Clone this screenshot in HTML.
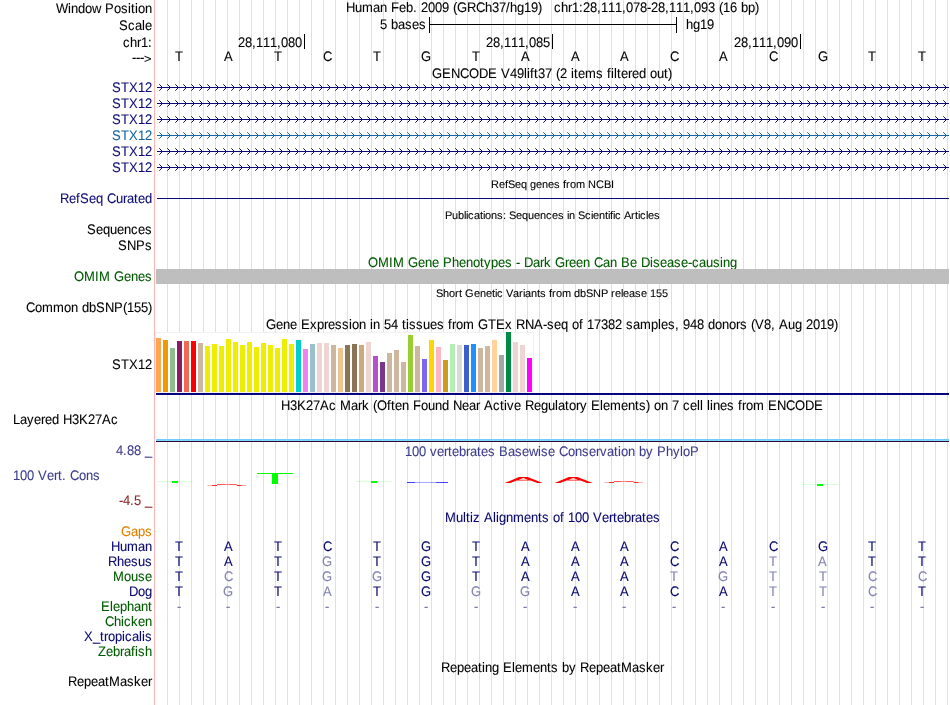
<!DOCTYPE html>
<html lang="en"><head><meta charset="utf-8"><title>UCSC Genome Browser chr1:28,111,078-28,111,093</title>
<style>html,body{margin:0;padding:0;background:#fff;overflow:hidden}svg{display:block;will-change:transform}text{font-family:"Liberation Sans",sans-serif;font-size:13px;white-space:pre;font-kerning:none;stroke-width:0.08px}</style>
</head><body>
<svg width="950" height="705" viewBox="0 0 950 705">
<defs>
<pattern id="gl" x="167" y="0" width="12" height="705" patternUnits="userSpaceOnUse"><rect x="0" y="0" width="1" height="705" fill="#dcdcff"/></pattern>
<path id="ch" d="M159.3,-3.2l3.2,3.2l-3.2,3.2M167.3,-3.2l3.2,3.2l-3.2,3.2M175.3,-3.2l3.2,3.2l-3.2,3.2M183.3,-3.2l3.2,3.2l-3.2,3.2M191.3,-3.2l3.2,3.2l-3.2,3.2M199.3,-3.2l3.2,3.2l-3.2,3.2M207.3,-3.2l3.2,3.2l-3.2,3.2M215.3,-3.2l3.2,3.2l-3.2,3.2M223.3,-3.2l3.2,3.2l-3.2,3.2M231.3,-3.2l3.2,3.2l-3.2,3.2M239.3,-3.2l3.2,3.2l-3.2,3.2M247.3,-3.2l3.2,3.2l-3.2,3.2M255.3,-3.2l3.2,3.2l-3.2,3.2M263.3,-3.2l3.2,3.2l-3.2,3.2M271.3,-3.2l3.2,3.2l-3.2,3.2M279.3,-3.2l3.2,3.2l-3.2,3.2M287.3,-3.2l3.2,3.2l-3.2,3.2M295.3,-3.2l3.2,3.2l-3.2,3.2M303.3,-3.2l3.2,3.2l-3.2,3.2M311.3,-3.2l3.2,3.2l-3.2,3.2M319.3,-3.2l3.2,3.2l-3.2,3.2M327.3,-3.2l3.2,3.2l-3.2,3.2M335.3,-3.2l3.2,3.2l-3.2,3.2M343.3,-3.2l3.2,3.2l-3.2,3.2M351.3,-3.2l3.2,3.2l-3.2,3.2M359.3,-3.2l3.2,3.2l-3.2,3.2M367.3,-3.2l3.2,3.2l-3.2,3.2M375.3,-3.2l3.2,3.2l-3.2,3.2M383.3,-3.2l3.2,3.2l-3.2,3.2M391.3,-3.2l3.2,3.2l-3.2,3.2M399.3,-3.2l3.2,3.2l-3.2,3.2M407.3,-3.2l3.2,3.2l-3.2,3.2M415.3,-3.2l3.2,3.2l-3.2,3.2M423.3,-3.2l3.2,3.2l-3.2,3.2M431.3,-3.2l3.2,3.2l-3.2,3.2M439.3,-3.2l3.2,3.2l-3.2,3.2M447.3,-3.2l3.2,3.2l-3.2,3.2M455.3,-3.2l3.2,3.2l-3.2,3.2M463.3,-3.2l3.2,3.2l-3.2,3.2M471.3,-3.2l3.2,3.2l-3.2,3.2M479.3,-3.2l3.2,3.2l-3.2,3.2M487.3,-3.2l3.2,3.2l-3.2,3.2M495.3,-3.2l3.2,3.2l-3.2,3.2M503.3,-3.2l3.2,3.2l-3.2,3.2M511.3,-3.2l3.2,3.2l-3.2,3.2M519.3,-3.2l3.2,3.2l-3.2,3.2M527.3,-3.2l3.2,3.2l-3.2,3.2M535.3,-3.2l3.2,3.2l-3.2,3.2M543.3,-3.2l3.2,3.2l-3.2,3.2M551.3,-3.2l3.2,3.2l-3.2,3.2M559.3,-3.2l3.2,3.2l-3.2,3.2M567.3,-3.2l3.2,3.2l-3.2,3.2M575.3,-3.2l3.2,3.2l-3.2,3.2M583.3,-3.2l3.2,3.2l-3.2,3.2M591.3,-3.2l3.2,3.2l-3.2,3.2M599.3,-3.2l3.2,3.2l-3.2,3.2M607.3,-3.2l3.2,3.2l-3.2,3.2M615.3,-3.2l3.2,3.2l-3.2,3.2M623.3,-3.2l3.2,3.2l-3.2,3.2M631.3,-3.2l3.2,3.2l-3.2,3.2M639.3,-3.2l3.2,3.2l-3.2,3.2M647.3,-3.2l3.2,3.2l-3.2,3.2M655.3,-3.2l3.2,3.2l-3.2,3.2M663.3,-3.2l3.2,3.2l-3.2,3.2M671.3,-3.2l3.2,3.2l-3.2,3.2M679.3,-3.2l3.2,3.2l-3.2,3.2M687.3,-3.2l3.2,3.2l-3.2,3.2M695.3,-3.2l3.2,3.2l-3.2,3.2M703.3,-3.2l3.2,3.2l-3.2,3.2M711.3,-3.2l3.2,3.2l-3.2,3.2M719.3,-3.2l3.2,3.2l-3.2,3.2M727.3,-3.2l3.2,3.2l-3.2,3.2M735.3,-3.2l3.2,3.2l-3.2,3.2M743.3,-3.2l3.2,3.2l-3.2,3.2M751.3,-3.2l3.2,3.2l-3.2,3.2M759.3,-3.2l3.2,3.2l-3.2,3.2M767.3,-3.2l3.2,3.2l-3.2,3.2M775.3,-3.2l3.2,3.2l-3.2,3.2M783.3,-3.2l3.2,3.2l-3.2,3.2M791.3,-3.2l3.2,3.2l-3.2,3.2M799.3,-3.2l3.2,3.2l-3.2,3.2M807.3,-3.2l3.2,3.2l-3.2,3.2M815.3,-3.2l3.2,3.2l-3.2,3.2M823.3,-3.2l3.2,3.2l-3.2,3.2M831.3,-3.2l3.2,3.2l-3.2,3.2M839.3,-3.2l3.2,3.2l-3.2,3.2M847.3,-3.2l3.2,3.2l-3.2,3.2M855.3,-3.2l3.2,3.2l-3.2,3.2M863.3,-3.2l3.2,3.2l-3.2,3.2M871.3,-3.2l3.2,3.2l-3.2,3.2M879.3,-3.2l3.2,3.2l-3.2,3.2M887.3,-3.2l3.2,3.2l-3.2,3.2M895.3,-3.2l3.2,3.2l-3.2,3.2M903.3,-3.2l3.2,3.2l-3.2,3.2M911.3,-3.2l3.2,3.2l-3.2,3.2M919.3,-3.2l3.2,3.2l-3.2,3.2M927.3,-3.2l3.2,3.2l-3.2,3.2M935.3,-3.2l3.2,3.2l-3.2,3.2M943.3,-3.2l3.2,3.2l-3.2,3.2" fill="none" stroke-width="1"/>
</defs>
<rect width="950" height="705" fill="#fff"/>
<rect x="156" y="0" width="794" height="705" fill="url(#gl)"/>
<rect x="154" y="0" width="1" height="705" fill="#ffb4b4"/>
<text transform="matrix(1 0.001 0 1.063 56 13)" x="0 12 15 22 29 36 45 49 58 65 72 75 79 82 89" y="0 -0.011 -0.014 -0.021 -0.027 -0.034 -0.042 -0.046 -0.055 -0.061 -0.068 -0.071 -0.074 -0.077 -0.084" fill="#000000" stroke="#000000">Window Position</text>
<text transform="matrix(1 0.001 0 1.063 119 30)" x="0 9 16 23 26" y="0 -0.008 -0.015 -0.022 -0.024" fill="#000000" stroke="#000000">Scale</text>
<text transform="matrix(1 0.001 0 1.063 123 47)" x="0 7 14 18 25" y="0 -0.007 -0.013 -0.017 -0.024" fill="#000000" stroke="#000000">chr1:</text>
<text transform="matrix(1 0.001 0 1.063 132 62)" x="0 4 8" y="0 -0.004 -0.008" fill="#000000" stroke="#000000">---</text>
<text transform="matrix(1 0.001 0 0.96 144 63)" x="0" y="0" fill="#000000" stroke="#000000">&gt;</text>
<text transform="matrix(1 0.001 0 1.063 112 92)" x="0 9 17 26 33" y="0 -0.008 -0.016 -0.024 -0.031" fill="#0c0c78" stroke="#0c0c78">STX12</text>
<text transform="matrix(1 0.001 0 1.063 112 108)" x="0 9 17 26 33" y="0 -0.008 -0.016 -0.024 -0.031" fill="#0c0c78" stroke="#0c0c78">STX12</text>
<text transform="matrix(1 0.001 0 1.063 112 124)" x="0 9 17 26 33" y="0 -0.008 -0.016 -0.024 -0.031" fill="#0c0c78" stroke="#0c0c78">STX12</text>
<text transform="matrix(1 0.001 0 1.063 112 140)" x="0 9 17 26 33" y="0 -0.008 -0.016 -0.024 -0.031" fill="#1565a5" stroke="#1565a5">STX12</text>
<text transform="matrix(1 0.001 0 1.063 112 156)" x="0 9 17 26 33" y="0 -0.008 -0.016 -0.024 -0.031" fill="#0c0c78" stroke="#0c0c78">STX12</text>
<text transform="matrix(1 0.001 0 1.063 112 172)" x="0 9 17 26 33" y="0 -0.008 -0.016 -0.024 -0.031" fill="#0c0c78" stroke="#0c0c78">STX12</text>
<text transform="matrix(1 0.001 0 1.063 60 203)" x="0 9 16 20 29 36 43 47 56 63 67 74 78 85" y="0 -0.008 -0.015 -0.019 -0.027 -0.034 -0.04 -0.044 -0.053 -0.059 -0.063 -0.07 -0.073 -0.08" fill="#0c0c78" stroke="#0c0c78">RefSeq Curated</text>
<text transform="matrix(1 0.001 0 1.063 87 234)" x="0 9 16 23 30 37 44 51 58" y="0 -0.008 -0.015 -0.022 -0.028 -0.035 -0.041 -0.048 -0.055" fill="#000000" stroke="#000000">Sequences</text>
<text transform="matrix(1 0.001 0 1.063 118 250)" x="0 9 18 27" y="0 -0.008 -0.017 -0.025" fill="#000000" stroke="#000000">SNPs</text>
<text transform="matrix(1 0.001 0 1.063 74 281)" x="0 10 21 25 36 40 50 57 64 71" y="0 -0.009 -0.02 -0.024 -0.034 -0.038 -0.047 -0.054 -0.06 -0.067" fill="#005a00" stroke="#005a00">OMIM Genes</text>
<text transform="matrix(1 0.001 0 1.063 26 312)" x="0 9 16 27 38 45 52 56 63 70 79 88 97 101 108 115 122" y="0 -0.008 -0.015 -0.025 -0.036 -0.042 -0.049 -0.053 -0.059 -0.066 -0.074 -0.083 -0.091 -0.095 -0.102 -0.108 -0.115" fill="#000000" stroke="#000000">Common dbSNP(155)</text>
<text transform="matrix(1 0.001 0 1.063 112 369)" x="0 9 17 26 33" y="0 -0.008 -0.016 -0.024 -0.031" fill="#000000" stroke="#000000">STX12</text>
<text transform="matrix(1 0.001 0 1.063 13 424)" x="0 7 14 21 28 32 39 46 50 59 66 75 82 89 98" y="0 -0.007 -0.013 -0.02 -0.026 -0.03 -0.037 -0.043 -0.047 -0.056 -0.062 -0.071 -0.077 -0.084 -0.092" fill="#000000" stroke="#000000">Layered H3K27Ac</text>
<text transform="matrix(1 0.001 0 1.063 116 455)" x="0 7 11 18 25 29" y="0 -0.007 -0.01 -0.017 -0.024 -0.027" fill="#3c3c8c" stroke="#3c3c8c">4.88 _</text>
<text transform="matrix(1 0.001 0 1.063 13 480)" x="0 7 14 21 25 34 41 45 49 53 57 66 73 80" y="0 -0.007 -0.013 -0.02 -0.024 -0.032 -0.039 -0.042 -0.046 -0.05 -0.054 -0.062 -0.069 -0.075" fill="#3c3c8c" stroke="#3c3c8c">100 Vert. Cons</text>
<text transform="matrix(1 0.001 0 1.063 119 505)" x="0 4 11 15 22 26" y="0 -0.004 -0.01 -0.014 -0.021 -0.024" fill="#8c2828" stroke="#8c2828">-4.5 _</text>
<text transform="matrix(1 0.001 0 1.063 121 536)" x="0 10 17 24" y="0 -0.009 -0.016 -0.023" fill="#e08000" stroke="#e08000">Gaps</text>
<text transform="matrix(1 0.001 0 1.063 111 551)" x="0 9 16 27 34" y="0 -0.008 -0.015 -0.025 -0.032" fill="#08086e" stroke="#08086e">Human</text>
<text transform="matrix(1 0.001 0 1.063 108 566)" x="0 9 16 23 30 37" y="0 -0.008 -0.015 -0.022 -0.028 -0.035" fill="#08086e" stroke="#08086e">Rhesus</text>
<text transform="matrix(1 0.001 0 1.063 113 581)" x="0 11 18 25 32" y="0 -0.01 -0.017 -0.024 -0.03" fill="#005a00" stroke="#005a00">Mouse</text>
<text transform="matrix(1 0.001 0 1.063 129 596)" x="0 9 16" y="0 -0.008 -0.015" fill="#08086e" stroke="#08086e">Dog</text>
<text transform="matrix(1 0.001 0 1.063 101 611)" x="0 9 12 19 26 33 40 47" y="0 -0.008 -0.011 -0.018 -0.024 -0.031 -0.038 -0.044" fill="#005a00" stroke="#005a00">Elephant</text>
<text transform="matrix(1 0.001 0 1.063 105 626)" x="0 9 16 19 26 33 40" y="0 -0.008 -0.015 -0.018 -0.024 -0.031 -0.038" fill="#005a00" stroke="#005a00">Chicken</text>
<text transform="matrix(1 0.001 0 1.063 84 641)" x="0 9 16 20 24 31 38 41 48 55 58 61" y="0 -0.008 -0.015 -0.019 -0.023 -0.029 -0.036 -0.039 -0.045 -0.052 -0.055 -0.057" fill="#08086e" stroke="#08086e">X_tropicalis</text>
<text transform="matrix(1 0.001 0 1.063 98 656)" x="0 8 15 22 26 33 37 40 47" y="0 -0.008 -0.014 -0.021 -0.024 -0.031 -0.035 -0.038 -0.044" fill="#005a00" stroke="#005a00">Zebrafish</text>
<text transform="matrix(1 0.001 0 1.063 68 686)" x="0 9 16 23 30 37 41 52 59 66 73 80" y="0 -0.008 -0.015 -0.022 -0.028 -0.035 -0.039 -0.049 -0.056 -0.062 -0.069 -0.075" fill="#000000" stroke="#000000">RepeatMasker</text>
<text transform="matrix(1 0.001 0 1.063 346 12)" x="0 9 16 27 34 41 45 53 60 67 71 75 82 89 96 103 107 111 121 130 139 146 153 160 164 171 178 185 192" y="0 -0.008 -0.015 -0.025 -0.032 -0.039 -0.042 -0.05 -0.056 -0.063 -0.067 -0.071 -0.077 -0.084 -0.09 -0.097 -0.101 -0.104 -0.114 -0.122 -0.131 -0.137 -0.144 -0.151 -0.154 -0.161 -0.167 -0.174 -0.181" fill="#000000" stroke="#000000">Human Feb. 2009 (GRCh37/hg19)</text>
<text transform="matrix(1 0.001 0 1.063 554 12)" x="0 7 14 18 25 29 36 43 47 54 61 68 72 79 86 93 97 104 111 115 122 129 136 140 147 154 161 165 169 176 183 187 194 201" y="0 -0.007 -0.013 -0.017 -0.024 -0.027 -0.034 -0.04 -0.044 -0.051 -0.057 -0.064 -0.068 -0.074 -0.081 -0.087 -0.091 -0.098 -0.104 -0.108 -0.115 -0.121 -0.128 -0.132 -0.138 -0.145 -0.151 -0.155 -0.159 -0.166 -0.172 -0.176 -0.183 -0.189" fill="#000000" stroke="#000000">chr1:28,111,078-28,111,093 (16 bp)</text>
<text transform="matrix(1 0.001 0 1.063 380 29)" x="0 7 11 18 25 32 39" y="0 -0.007 -0.01 -0.017 -0.024 -0.03 -0.037" fill="#000000" stroke="#000000">5 bases</text>
<text transform="matrix(1 0.001 0 1.063 686 29)" x="0 7 14 21" y="0 -0.007 -0.013 -0.02" fill="#000000" stroke="#000000">hg19</text>
<text transform="matrix(1 0.001 0 1.063 238 47)" x="0 7 14 18 25 32 39 43 50 57" y="0 -0.007 -0.013 -0.017 -0.024 -0.03 -0.037 -0.04 -0.047 -0.054" fill="#000000" stroke="#000000">28,111,080</text>
<text transform="matrix(1 0.001 0 1.063 486 47)" x="0 7 14 18 25 32 39 43 50 57" y="0 -0.007 -0.013 -0.017 -0.024 -0.03 -0.037 -0.04 -0.047 -0.054" fill="#000000" stroke="#000000">28,111,085</text>
<text transform="matrix(1 0.001 0 1.063 734 47)" x="0 7 14 18 25 32 39 43 50 57" y="0 -0.007 -0.013 -0.017 -0.024 -0.03 -0.037 -0.04 -0.047 -0.054" fill="#000000" stroke="#000000">28,111,090</text>
<text transform="matrix(1 0.001 0 1.063 432 78)" x="0 10 19 28 37 47 56 65 69 78 85 92 95 98 102 106 113 120 124 128 135 139 142 146 153 164 171 175 179 182 185 189 196 200 207 214 218 225 232 236" y="0 -0.009 -0.018 -0.026 -0.035 -0.044 -0.053 -0.061 -0.065 -0.073 -0.08 -0.087 -0.089 -0.092 -0.096 -0.1 -0.106 -0.113 -0.117 -0.12 -0.127 -0.131 -0.134 -0.137 -0.144 -0.154 -0.161 -0.165 -0.168 -0.171 -0.174 -0.178 -0.184 -0.188 -0.195 -0.201 -0.205 -0.212 -0.218 -0.222" fill="#000000" stroke="#000000">GENCODE V49lift37 (2 items filtered out)</text>
<text transform="matrix(1 0.001 0 1.0 491 188)" x="0 8 14 17 24 30 36 39 45 51 57 63 69 72 75 79 85 94 97 105 113 120" y="0 -0.008 -0.014 -0.017 -0.024 -0.03 -0.036 -0.039 -0.045 -0.051 -0.057 -0.063 -0.069 -0.072 -0.075 -0.079 -0.085 -0.094 -0.097 -0.105 -0.113 -0.12" font-size="11" style="font-size:11px" fill="#000000" stroke="#000000">RefSeq genes from NCBI</text>
<text transform="matrix(1 0.001 0 1.0 445 219)" x="0 7 13 19 21 23 29 35 38 40 46 52 58 61 64 71 77 83 89 95 101 107 113 119 122 124 130 133 140 146 148 154 160 163 165 168 170 176 179 186 190 193 195 201 203 209" y="0 -0.007 -0.013 -0.019 -0.021 -0.023 -0.029 -0.035 -0.038 -0.04 -0.046 -0.052 -0.058 -0.061 -0.064 -0.071 -0.077 -0.083 -0.089 -0.095 -0.101 -0.107 -0.113 -0.119 -0.122 -0.124 -0.13 -0.133 -0.14 -0.146 -0.148 -0.154 -0.16 -0.163 -0.165 -0.168 -0.17 -0.176 -0.179 -0.186 -0.19 -0.193 -0.195 -0.201 -0.203 -0.209" font-size="11" style="font-size:11px" fill="#000000" stroke="#000000">Publications: Sequences in Scientific Articles</text>
<text transform="matrix(1 0.001 0 1.063 368 267)" x="0 10 21 25 36 40 50 57 64 71 75 84 91 98 105 112 116 123 130 137 144 148 152 156 165 172 176 183 187 197 201 208 215 222 226 235 242 249 253 262 269 273 282 285 292 299 306 313 320 324 331 338 345 352 355 362" y="0 -0.009 -0.02 -0.024 -0.034 -0.038 -0.047 -0.054 -0.06 -0.067 -0.071 -0.079 -0.086 -0.092 -0.099 -0.105 -0.109 -0.116 -0.122 -0.129 -0.135 -0.139 -0.143 -0.147 -0.155 -0.162 -0.166 -0.172 -0.176 -0.185 -0.189 -0.196 -0.202 -0.209 -0.213 -0.221 -0.228 -0.234 -0.238 -0.246 -0.253 -0.257 -0.265 -0.268 -0.275 -0.281 -0.288 -0.294 -0.301 -0.305 -0.311 -0.318 -0.325 -0.331 -0.334 -0.341" fill="#005a00" stroke="#005a00">OMIM Gene Phenotypes - Dark Green Can Be Disease-causing</text>
<text transform="matrix(1 0.001 0 1.0 436 297)" x="0 7 13 19 23 26 29 38 44 50 56 59 61 67 70 77 83 87 89 95 101 104 110 113 116 120 126 135 138 144 150 157 165 172 175 179 185 187 193 199 205 211 214 220 226" y="0 -0.007 -0.013 -0.019 -0.023 -0.026 -0.029 -0.038 -0.044 -0.05 -0.056 -0.059 -0.061 -0.067 -0.07 -0.077 -0.083 -0.087 -0.089 -0.095 -0.101 -0.104 -0.11 -0.113 -0.116 -0.12 -0.126 -0.135 -0.138 -0.144 -0.15 -0.157 -0.165 -0.172 -0.175 -0.179 -0.185 -0.187 -0.193 -0.199 -0.205 -0.211 -0.214 -0.22 -0.226" font-size="11" style="font-size:11px" fill="#000000" stroke="#000000">Short Genetic Variants from dbSNP release 155</text>
<text transform="matrix(1 0.001 0 1.063 266 329)" x="0 10 17 24 31 35 44 51 58 62 69 76 83 86 93 100 104 107 114 118 125 132 136 140 143 150 157 164 171 178 182 186 190 197 208 212 222 230 239 246 250 259 268 277 281 288 295 302 306 313 317 321 328 335 342 349 356 360 367 374 385 392 395 402 409 413 417 424 431 438 442 449 456 463 470 474 481 485 489 498 505 509 513 522 529 536 540 547 554 561 568" y="0 -0.009 -0.016 -0.023 -0.029 -0.033 -0.041 -0.048 -0.055 -0.058 -0.065 -0.071 -0.078 -0.081 -0.087 -0.094 -0.098 -0.101 -0.107 -0.111 -0.118 -0.124 -0.128 -0.132 -0.135 -0.141 -0.148 -0.154 -0.161 -0.167 -0.171 -0.175 -0.179 -0.185 -0.196 -0.199 -0.209 -0.216 -0.225 -0.231 -0.235 -0.244 -0.252 -0.261 -0.264 -0.271 -0.278 -0.284 -0.288 -0.294 -0.298 -0.302 -0.309 -0.315 -0.322 -0.328 -0.335 -0.339 -0.345 -0.352 -0.362 -0.369 -0.372 -0.378 -0.385 -0.389 -0.392 -0.399 -0.405 -0.412 -0.416 -0.422 -0.429 -0.436 -0.442 -0.446 -0.452 -0.456 -0.46 -0.468 -0.475 -0.479 -0.483 -0.491 -0.498 -0.504 -0.508 -0.515 -0.521 -0.528 -0.534" fill="#000000" stroke="#000000">Gene Expression in 54 tissues from GTEx RNA-seq of 17382 samples, 948 donors (V8, Aug 2019)</text>
<text transform="matrix(1 0.001 0 1.063 281 410)" x="0 9 16 25 32 39 48 55 59 70 77 81 88 92 96 106 110 114 121 128 132 140 147 154 161 168 172 181 188 195 199 203 212 219 223 226 233 240 244 253 260 267 274 277 284 288 295 299 306 310 319 322 329 340 347 354 358 365 369 373 380 387 391 398 402 409 416 419 422 426 429 432 439 446 453 457 461 465 472 483 487 496 505 514 524 533" y="0 -0.008 -0.015 -0.024 -0.03 -0.037 -0.045 -0.052 -0.056 -0.066 -0.072 -0.076 -0.083 -0.087 -0.09 -0.1 -0.103 -0.107 -0.114 -0.12 -0.124 -0.132 -0.138 -0.145 -0.151 -0.158 -0.162 -0.17 -0.177 -0.183 -0.187 -0.191 -0.199 -0.206 -0.21 -0.213 -0.219 -0.226 -0.23 -0.238 -0.245 -0.251 -0.258 -0.261 -0.267 -0.271 -0.278 -0.281 -0.288 -0.292 -0.3 -0.303 -0.31 -0.32 -0.326 -0.333 -0.337 -0.343 -0.347 -0.351 -0.357 -0.364 -0.368 -0.374 -0.378 -0.385 -0.391 -0.394 -0.397 -0.401 -0.404 -0.406 -0.413 -0.42 -0.426 -0.43 -0.434 -0.437 -0.444 -0.454 -0.458 -0.467 -0.475 -0.484 -0.493 -0.501" fill="#000000" stroke="#000000">H3K27Ac Mark (Often Found Near Active Regulatory Elements) on 7 cell lines from ENCODE</text>
<text transform="matrix(1 0.001 0 1.063 405 456)" x="0 7 14 21 25 32 39 43 47 54 61 65 72 76 83 90 94 103 110 117 124 133 136 143 150 154 163 170 177 184 191 195 202 209 213 216 223 230 234 241 248 252 261 268 275 278 285" y="0 -0.007 -0.013 -0.02 -0.024 -0.03 -0.037 -0.04 -0.044 -0.051 -0.057 -0.061 -0.068 -0.071 -0.078 -0.085 -0.088 -0.097 -0.103 -0.11 -0.117 -0.125 -0.128 -0.135 -0.141 -0.145 -0.153 -0.16 -0.167 -0.173 -0.18 -0.183 -0.19 -0.197 -0.2 -0.203 -0.21 -0.216 -0.22 -0.227 -0.233 -0.237 -0.246 -0.252 -0.259 -0.262 -0.268" fill="#3c3c8c" stroke="#3c3c8c">100 vertebrates Basewise Conservation by PhyloP</text>
<text transform="matrix(1 0.001 0 1.063 445 522)" x="0 11 18 21 25 28 35 39 48 51 54 61 68 79 86 93 97 104 108 115 119 123 130 137 144 148 157 164 168 172 179 186 190 197 201 208" y="0 -0.01 -0.017 -0.02 -0.024 -0.026 -0.033 -0.037 -0.045 -0.048 -0.051 -0.057 -0.064 -0.074 -0.081 -0.087 -0.091 -0.098 -0.102 -0.108 -0.112 -0.116 -0.122 -0.129 -0.135 -0.139 -0.148 -0.154 -0.158 -0.162 -0.168 -0.175 -0.179 -0.185 -0.189 -0.196" fill="#08086e" stroke="#08086e">Multiz Alignments of 100 Vertebrates</text>
<text transform="matrix(1 0.001 0 1.063 441 672)" x="0 9 16 23 30 37 41 44 51 58 62 71 74 81 92 99 106 110 117 121 128 135 139 148 155 162 169 176 180 191 198 205 212 219" y="0 -0.008 -0.015 -0.022 -0.028 -0.035 -0.039 -0.041 -0.048 -0.055 -0.058 -0.067 -0.07 -0.076 -0.087 -0.093 -0.1 -0.103 -0.11 -0.114 -0.12 -0.127 -0.131 -0.139 -0.146 -0.152 -0.159 -0.166 -0.169 -0.18 -0.186 -0.193 -0.199 -0.206" fill="#000000" stroke="#000000">Repeating Elements by RepeatMasker</text>
<rect x="429" y="24" width="248" height="1" fill="#000"/>
<rect x="429" y="17" width="1" height="16" fill="#000"/>
<rect x="676" y="17" width="1" height="16" fill="#000"/>
<rect x="304" y="34" width="1" height="15" fill="#000"/>
<rect x="552" y="34" width="1" height="15" fill="#000"/>
<rect x="800" y="34" width="1" height="15" fill="#000"/>
<text transform="matrix(1 0.001 0 1.063 175 61)" x="0" y="0" fill="#000000" stroke="#000000">T</text>
<text transform="matrix(1 0.001 0 1.063 224 61)" x="0" y="0" fill="#000000" stroke="#000000">A</text>
<text transform="matrix(1 0.001 0 1.063 274 61)" x="0" y="0" fill="#000000" stroke="#000000">T</text>
<text transform="matrix(1 0.001 0 1.063 323 61)" x="0" y="0" fill="#000000" stroke="#000000">C</text>
<text transform="matrix(1 0.001 0 1.063 373 61)" x="0" y="0" fill="#000000" stroke="#000000">T</text>
<text transform="matrix(1 0.001 0 1.063 421 61)" x="0" y="0" fill="#000000" stroke="#000000">G</text>
<text transform="matrix(1 0.001 0 1.063 472 61)" x="0" y="0" fill="#000000" stroke="#000000">T</text>
<text transform="matrix(1 0.001 0 1.063 521 61)" x="0" y="0" fill="#000000" stroke="#000000">A</text>
<text transform="matrix(1 0.001 0 1.063 571 61)" x="0" y="0" fill="#000000" stroke="#000000">A</text>
<text transform="matrix(1 0.001 0 1.063 620 61)" x="0" y="0" fill="#000000" stroke="#000000">A</text>
<text transform="matrix(1 0.001 0 1.063 670 61)" x="0" y="0" fill="#000000" stroke="#000000">C</text>
<text transform="matrix(1 0.001 0 1.063 719 61)" x="0" y="0" fill="#000000" stroke="#000000">A</text>
<text transform="matrix(1 0.001 0 1.063 769 61)" x="0" y="0" fill="#000000" stroke="#000000">C</text>
<text transform="matrix(1 0.001 0 1.063 818 61)" x="0" y="0" fill="#000000" stroke="#000000">G</text>
<text transform="matrix(1 0.001 0 1.063 868 61)" x="0" y="0" fill="#000000" stroke="#000000">T</text>
<text transform="matrix(1 0.001 0 1.063 918 61)" x="0" y="0" fill="#000000" stroke="#000000">T</text>
<rect x="157" y="87" width="792" height="1" fill="#0c0c78"/>
<use href="#ch" y="87.5" stroke="#0c0c78"/>
<rect x="157" y="103" width="792" height="1" fill="#0c0c78"/>
<use href="#ch" y="103.5" stroke="#0c0c78"/>
<rect x="157" y="119" width="792" height="1" fill="#0c0c78"/>
<use href="#ch" y="119.5" stroke="#0c0c78"/>
<rect x="157" y="135" width="792" height="1" fill="#1565a5"/>
<use href="#ch" y="135.5" stroke="#1565a5"/>
<rect x="157" y="151" width="792" height="1" fill="#0c0c78"/>
<use href="#ch" y="151.5" stroke="#0c0c78"/>
<rect x="157" y="167" width="792" height="1" fill="#0c0c78"/>
<use href="#ch" y="167.5" stroke="#0c0c78"/>
<rect x="157" y="198" width="792" height="1" fill="#0c0c78"/>
<rect x="156" y="269" width="793" height="15" fill="#bebebe"/>
<rect x="155.5" y="332.5" width="378" height="60" fill="#fff" stroke="#f1f1f1"/>
<rect x="156" y="338" width="5" height="54" fill="#ffa54f"/>
<rect x="163" y="340" width="5" height="52" fill="#ee9a00"/>
<rect x="170" y="348" width="5" height="44" fill="#8fbc8f"/>
<rect x="177" y="341" width="5" height="51" fill="#8b1c62"/>
<rect x="184" y="341" width="5" height="51" fill="#ee6a50"/>
<rect x="191" y="341" width="5" height="51" fill="#ff0000"/>
<rect x="198" y="343" width="5" height="49" fill="#cdb79e"/>
<rect x="205" y="346" width="5" height="46" fill="#eeee00"/>
<rect x="212" y="344" width="5" height="48" fill="#eeee00"/>
<rect x="219" y="346" width="5" height="46" fill="#eeee00"/>
<rect x="226" y="339" width="5" height="53" fill="#eeee00"/>
<rect x="233" y="342" width="5" height="50" fill="#eeee00"/>
<rect x="240" y="345" width="5" height="47" fill="#eeee00"/>
<rect x="247" y="342" width="5" height="50" fill="#eeee00"/>
<rect x="254" y="347" width="5" height="45" fill="#eeee00"/>
<rect x="261" y="343" width="5" height="49" fill="#eeee00"/>
<rect x="268" y="345" width="5" height="47" fill="#eeee00"/>
<rect x="275" y="348" width="5" height="44" fill="#eeee00"/>
<rect x="282" y="339" width="5" height="53" fill="#eeee00"/>
<rect x="289" y="344" width="5" height="48" fill="#eeee00"/>
<rect x="296" y="340" width="5" height="52" fill="#00cdcd"/>
<rect x="303" y="349" width="5" height="43" fill="#ee82ee"/>
<rect x="310" y="344" width="5" height="48" fill="#9ac0cd"/>
<rect x="317" y="343" width="5" height="49" fill="#eed5d2"/>
<rect x="324" y="343" width="5" height="49" fill="#eed5d2"/>
<rect x="331" y="345" width="5" height="47" fill="#cdb79e"/>
<rect x="338" y="348" width="5" height="44" fill="#eec591"/>
<rect x="345" y="345" width="5" height="47" fill="#8b7355"/>
<rect x="352" y="344" width="5" height="48" fill="#8b7355"/>
<rect x="359" y="345" width="5" height="47" fill="#cdaa7d"/>
<rect x="366" y="342" width="5" height="50" fill="#eed5d2"/>
<rect x="373" y="356" width="5" height="36" fill="#b452cd"/>
<rect x="380" y="362" width="5" height="30" fill="#7a378b"/>
<rect x="387" y="353" width="5" height="39" fill="#cdb79e"/>
<rect x="394" y="350" width="5" height="42" fill="#cdb79e"/>
<rect x="401" y="362" width="5" height="30" fill="#cdb79e"/>
<rect x="408" y="335" width="5" height="57" fill="#9acd32"/>
<rect x="415" y="346" width="5" height="46" fill="#cdb79e"/>
<rect x="422" y="359" width="5" height="33" fill="#7a67ee"/>
<rect x="429" y="340" width="5" height="52" fill="#ffd700"/>
<rect x="436" y="347" width="5" height="45" fill="#ffb6c1"/>
<rect x="443" y="360" width="5" height="32" fill="#cd9b1d"/>
<rect x="450" y="344" width="5" height="48" fill="#b4eeb4"/>
<rect x="457" y="345" width="5" height="47" fill="#d9d9d9"/>
<rect x="464" y="345" width="5" height="47" fill="#3a5fcd"/>
<rect x="471" y="344" width="5" height="48" fill="#1e90ff"/>
<rect x="478" y="348" width="5" height="44" fill="#cdb79e"/>
<rect x="485" y="346" width="5" height="46" fill="#cdb79e"/>
<rect x="492" y="340" width="5" height="52" fill="#ffd39b"/>
<rect x="499" y="355" width="5" height="37" fill="#a6a6a6"/>
<rect x="506" y="332" width="5" height="60" fill="#008b45"/>
<rect x="513" y="342" width="5" height="50" fill="#eed5d2"/>
<rect x="520" y="345" width="5" height="47" fill="#eed5d2"/>
<rect x="527" y="358" width="5" height="34" fill="#ff00ff"/>
<rect x="156" y="393" width="793" height="2" fill="#04047c"/>
<rect x="156" y="439" width="793" height="1" fill="#70ccff"/>
<rect x="156" y="440" width="793" height="1" fill="#7cdcff"/>
<rect x="156" y="441" width="793" height="1" fill="#300838"/>
<rect x="157" y="481" width="36" height="1" fill="#00ff00" opacity="0.15"/>
<rect x="172" y="481" width="6" height="2" fill="#00ff00"/>
<rect x="257" y="473" width="36" height="1" fill="#00ff00" opacity="1"/>
<rect x="272" y="473" width="6" height="11" fill="#00ff00"/>
<rect x="356" y="481" width="36" height="1" fill="#00ff00" opacity="0.15"/>
<rect x="371" y="481" width="6" height="2" fill="#00ff00"/>
<rect x="802" y="484" width="36" height="1" fill="#00ff00" opacity="0.15"/>
<rect x="817" y="484" width="6" height="2" fill="#00ff00"/>
<rect x="207.5" y="485" width="4.5" height="1" fill="#ff0000" opacity="0.3"/>
<rect x="212" y="485" width="5" height="1" fill="#ff0000" opacity="0.85"/>
<rect x="217" y="484" width="8" height="1" fill="#ff0000" opacity="0.65"/>
<rect x="225" y="484" width="3.5" height="1" fill="#ff0000" opacity="0.45"/>
<rect x="228.5" y="484" width="8.2" height="1" fill="#ff0000" opacity="0.65"/>
<rect x="236.7" y="485" width="4.8" height="1" fill="#ff0000" opacity="0.85"/>
<rect x="241.5" y="485" width="4.5" height="1" fill="#ff0000" opacity="0.3"/>
<rect x="407" y="482" width="41" height="1" fill="#0000ff" opacity="0.35"/>
<rect x="407" y="482" width="8" height="1" fill="#0000ff" opacity="0.6"/>
<rect x="436" y="482" width="12" height="1" fill="#0000ff" opacity="0.6"/>
<path transform="translate(0,0)" fill="#ff0000" fill-rule="evenodd" d="M504.8,483 L519,477 L527.6,477 L542.7,483 L537.2,483 L530.6,480.5 L516.6,480.5 L510.3,483 Z M518.6,479.8 L523.3,477.9 L528,479.8 Z"/>
<path transform="translate(49.9,0)" fill="#ff0000" fill-rule="evenodd" d="M504.8,483 L519,477 L527.6,477 L542.7,483 L537.2,483 L530.6,480.5 L516.6,480.5 L510.3,483 Z M518.6,479.8 L523.3,477.9 L528,479.8 Z"/>
<rect x="604.5" y="482" width="4.5" height="1" fill="#ff0000" opacity="0.3"/>
<rect x="609" y="482" width="5" height="1" fill="#ff0000" opacity="0.85"/>
<rect x="614" y="481" width="8" height="1" fill="#ff0000" opacity="0.65"/>
<rect x="622" y="481" width="3.5" height="1" fill="#ff0000" opacity="0.45"/>
<rect x="625.5" y="481" width="8.2" height="1" fill="#ff0000" opacity="0.65"/>
<rect x="633.7" y="482" width="4.8" height="1" fill="#ff0000" opacity="0.85"/>
<rect x="638.5" y="482" width="4.5" height="1" fill="#ff0000" opacity="0.3"/>
<text transform="matrix(1 0.001 0 1.063 175 551)" x="0" y="0" fill="#08086e" stroke="#08086e">T</text>
<text transform="matrix(1 0.001 0 1.063 224 551)" x="0" y="0" fill="#08086e" stroke="#08086e">A</text>
<text transform="matrix(1 0.001 0 1.063 274 551)" x="0" y="0" fill="#08086e" stroke="#08086e">T</text>
<text transform="matrix(1 0.001 0 1.063 323 551)" x="0" y="0" fill="#08086e" stroke="#08086e">C</text>
<text transform="matrix(1 0.001 0 1.063 373 551)" x="0" y="0" fill="#08086e" stroke="#08086e">T</text>
<text transform="matrix(1 0.001 0 1.063 421 551)" x="0" y="0" fill="#08086e" stroke="#08086e">G</text>
<text transform="matrix(1 0.001 0 1.063 472 551)" x="0" y="0" fill="#08086e" stroke="#08086e">T</text>
<text transform="matrix(1 0.001 0 1.063 521 551)" x="0" y="0" fill="#08086e" stroke="#08086e">A</text>
<text transform="matrix(1 0.001 0 1.063 571 551)" x="0" y="0" fill="#08086e" stroke="#08086e">A</text>
<text transform="matrix(1 0.001 0 1.063 620 551)" x="0" y="0" fill="#08086e" stroke="#08086e">A</text>
<text transform="matrix(1 0.001 0 1.063 670 551)" x="0" y="0" fill="#08086e" stroke="#08086e">C</text>
<text transform="matrix(1 0.001 0 1.063 719 551)" x="0" y="0" fill="#08086e" stroke="#08086e">A</text>
<text transform="matrix(1 0.001 0 1.063 769 551)" x="0" y="0" fill="#08086e" stroke="#08086e">C</text>
<text transform="matrix(1 0.001 0 1.063 818 551)" x="0" y="0" fill="#08086e" stroke="#08086e">G</text>
<text transform="matrix(1 0.001 0 1.063 868 551)" x="0" y="0" fill="#08086e" stroke="#08086e">T</text>
<text transform="matrix(1 0.001 0 1.063 918 551)" x="0" y="0" fill="#08086e" stroke="#08086e">T</text>
<text transform="matrix(1 0.001 0 1.063 175 566)" x="0" y="0" fill="#08086e" stroke="#08086e">T</text>
<text transform="matrix(1 0.001 0 1.063 224 566)" x="0" y="0" fill="#08086e" stroke="#08086e">A</text>
<text transform="matrix(1 0.001 0 1.063 274 566)" x="0" y="0" fill="#08086e" stroke="#08086e">T</text>
<text transform="matrix(1 0.001 0 1.063 322 566)" x="0" y="0" fill="#8484b2" stroke="#8484b2">G</text>
<text transform="matrix(1 0.001 0 1.063 373 566)" x="0" y="0" fill="#08086e" stroke="#08086e">T</text>
<text transform="matrix(1 0.001 0 1.063 421 566)" x="0" y="0" fill="#08086e" stroke="#08086e">G</text>
<text transform="matrix(1 0.001 0 1.063 472 566)" x="0" y="0" fill="#08086e" stroke="#08086e">T</text>
<text transform="matrix(1 0.001 0 1.063 521 566)" x="0" y="0" fill="#08086e" stroke="#08086e">A</text>
<text transform="matrix(1 0.001 0 1.063 571 566)" x="0" y="0" fill="#08086e" stroke="#08086e">A</text>
<text transform="matrix(1 0.001 0 1.063 620 566)" x="0" y="0" fill="#08086e" stroke="#08086e">A</text>
<text transform="matrix(1 0.001 0 1.063 670 566)" x="0" y="0" fill="#08086e" stroke="#08086e">C</text>
<text transform="matrix(1 0.001 0 1.063 719 566)" x="0" y="0" fill="#08086e" stroke="#08086e">A</text>
<text transform="matrix(1 0.001 0 1.063 769 566)" x="0" y="0" fill="#8484b2" stroke="#8484b2">T</text>
<text transform="matrix(1 0.001 0 1.063 818 566)" x="0" y="0" fill="#8484b2" stroke="#8484b2">A</text>
<text transform="matrix(1 0.001 0 1.063 868 566)" x="0" y="0" fill="#08086e" stroke="#08086e">T</text>
<text transform="matrix(1 0.001 0 1.063 918 566)" x="0" y="0" fill="#08086e" stroke="#08086e">T</text>
<text transform="matrix(1 0.001 0 1.063 175 581)" x="0" y="0" fill="#08086e" stroke="#08086e">T</text>
<text transform="matrix(1 0.001 0 1.063 224 581)" x="0" y="0" fill="#8484b2" stroke="#8484b2">C</text>
<text transform="matrix(1 0.001 0 1.063 274 581)" x="0" y="0" fill="#08086e" stroke="#08086e">T</text>
<text transform="matrix(1 0.001 0 1.063 322 581)" x="0" y="0" fill="#8484b2" stroke="#8484b2">G</text>
<text transform="matrix(1 0.001 0 1.063 372 581)" x="0" y="0" fill="#8484b2" stroke="#8484b2">G</text>
<text transform="matrix(1 0.001 0 1.063 421 581)" x="0" y="0" fill="#08086e" stroke="#08086e">G</text>
<text transform="matrix(1 0.001 0 1.063 472 581)" x="0" y="0" fill="#08086e" stroke="#08086e">T</text>
<text transform="matrix(1 0.001 0 1.063 521 581)" x="0" y="0" fill="#08086e" stroke="#08086e">A</text>
<text transform="matrix(1 0.001 0 1.063 571 581)" x="0" y="0" fill="#08086e" stroke="#08086e">A</text>
<text transform="matrix(1 0.001 0 1.063 620 581)" x="0" y="0" fill="#08086e" stroke="#08086e">A</text>
<text transform="matrix(1 0.001 0 1.063 670 581)" x="0" y="0" fill="#8484b2" stroke="#8484b2">T</text>
<text transform="matrix(1 0.001 0 1.063 718 581)" x="0" y="0" fill="#8484b2" stroke="#8484b2">G</text>
<text transform="matrix(1 0.001 0 1.063 769 581)" x="0" y="0" fill="#8484b2" stroke="#8484b2">T</text>
<text transform="matrix(1 0.001 0 1.063 819 581)" x="0" y="0" fill="#8484b2" stroke="#8484b2">T</text>
<text transform="matrix(1 0.001 0 1.063 868 581)" x="0" y="0" fill="#8484b2" stroke="#8484b2">C</text>
<text transform="matrix(1 0.001 0 1.063 918 581)" x="0" y="0" fill="#8484b2" stroke="#8484b2">C</text>
<text transform="matrix(1 0.001 0 1.063 175 596)" x="0" y="0" fill="#08086e" stroke="#08086e">T</text>
<text transform="matrix(1 0.001 0 1.063 223 596)" x="0" y="0" fill="#8484b2" stroke="#8484b2">G</text>
<text transform="matrix(1 0.001 0 1.063 274 596)" x="0" y="0" fill="#08086e" stroke="#08086e">T</text>
<text transform="matrix(1 0.001 0 1.063 323 596)" x="0" y="0" fill="#8484b2" stroke="#8484b2">A</text>
<text transform="matrix(1 0.001 0 1.063 373 596)" x="0" y="0" fill="#08086e" stroke="#08086e">T</text>
<text transform="matrix(1 0.001 0 1.063 421 596)" x="0" y="0" fill="#08086e" stroke="#08086e">G</text>
<text transform="matrix(1 0.001 0 1.063 471 596)" x="0" y="0" fill="#8484b2" stroke="#8484b2">G</text>
<text transform="matrix(1 0.001 0 1.063 520 596)" x="0" y="0" fill="#8484b2" stroke="#8484b2">G</text>
<text transform="matrix(1 0.001 0 1.063 571 596)" x="0" y="0" fill="#08086e" stroke="#08086e">A</text>
<text transform="matrix(1 0.001 0 1.063 620 596)" x="0" y="0" fill="#08086e" stroke="#08086e">A</text>
<text transform="matrix(1 0.001 0 1.063 670 596)" x="0" y="0" fill="#08086e" stroke="#08086e">C</text>
<text transform="matrix(1 0.001 0 1.063 719 596)" x="0" y="0" fill="#08086e" stroke="#08086e">A</text>
<text transform="matrix(1 0.001 0 1.063 769 596)" x="0" y="0" fill="#8484b2" stroke="#8484b2">T</text>
<text transform="matrix(1 0.001 0 1.063 819 596)" x="0" y="0" fill="#8484b2" stroke="#8484b2">T</text>
<text transform="matrix(1 0.001 0 1.063 868 596)" x="0" y="0" fill="#8484b2" stroke="#8484b2">C</text>
<text transform="matrix(1 0.001 0 1.063 918 596)" x="0" y="0" fill="#08086e" stroke="#08086e">T</text>
<text transform="matrix(1 0.001 0 1.063 177 611)" x="0" y="0" fill="#7c7cae" stroke="#7c7cae">-</text>
<text transform="matrix(1 0.001 0 1.063 226 611)" x="0" y="0" fill="#7c7cae" stroke="#7c7cae">-</text>
<text transform="matrix(1 0.001 0 1.063 276 611)" x="0" y="0" fill="#7c7cae" stroke="#7c7cae">-</text>
<text transform="matrix(1 0.001 0 1.063 325 611)" x="0" y="0" fill="#7c7cae" stroke="#7c7cae">-</text>
<text transform="matrix(1 0.001 0 1.063 375 611)" x="0" y="0" fill="#7c7cae" stroke="#7c7cae">-</text>
<text transform="matrix(1 0.001 0 1.063 424 611)" x="0" y="0" fill="#7c7cae" stroke="#7c7cae">-</text>
<text transform="matrix(1 0.001 0 1.063 474 611)" x="0" y="0" fill="#7c7cae" stroke="#7c7cae">-</text>
<text transform="matrix(1 0.001 0 1.063 523 611)" x="0" y="0" fill="#7c7cae" stroke="#7c7cae">-</text>
<text transform="matrix(1 0.001 0 1.063 573 611)" x="0" y="0" fill="#7c7cae" stroke="#7c7cae">-</text>
<text transform="matrix(1 0.001 0 1.063 622 611)" x="0" y="0" fill="#7c7cae" stroke="#7c7cae">-</text>
<text transform="matrix(1 0.001 0 1.063 672 611)" x="0" y="0" fill="#7c7cae" stroke="#7c7cae">-</text>
<text transform="matrix(1 0.001 0 1.063 721 611)" x="0" y="0" fill="#7c7cae" stroke="#7c7cae">-</text>
<text transform="matrix(1 0.001 0 1.063 771 611)" x="0" y="0" fill="#7c7cae" stroke="#7c7cae">-</text>
<text transform="matrix(1 0.001 0 1.063 821 611)" x="0" y="0" fill="#7c7cae" stroke="#7c7cae">-</text>
<text transform="matrix(1 0.001 0 1.063 870 611)" x="0" y="0" fill="#7c7cae" stroke="#7c7cae">-</text>
<text transform="matrix(1 0.001 0 1.063 920 611)" x="0" y="0" fill="#7c7cae" stroke="#7c7cae">-</text>
</svg>
</body></html>
